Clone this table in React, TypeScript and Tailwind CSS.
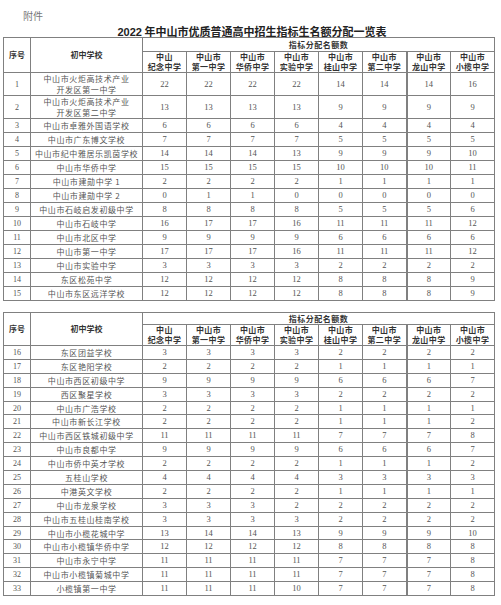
import React from 'react';

type Row = { no: number; school: string[]; nums: number[]; tall?: boolean };

const heads = [
  ['中山', '纪念中学'],
  ['中山市', '第一中学'],
  ['中山市', '华侨中学'],
  ['中山市', '实验中学'],
  ['中山市', '桂山中学'],
  ['中山市', '第二中学'],
  ['中山市', '龙山中学'],
  ['中山市', '小榄中学'],
];

const first: Row[] = [
  { no: 1, school: ['中山市火炬高技术产业', '开发区第一中学'], nums: [22, 22, 22, 22, 14, 14, 14, 16], tall: true },
  { no: 2, school: ['中山市火炬高技术产业', '开发区第二中学'], nums: [13, 13, 13, 13, 9, 9, 9, 9], tall: true },
  { no: 3, school: ['中山市卓雅外国语学校'], nums: [6, 6, 6, 6, 4, 4, 4, 4] },
  { no: 4, school: ['中山市广东博文学校'], nums: [7, 7, 7, 7, 5, 5, 5, 5] },
  { no: 5, school: ['中山市纪中雅居乐凯茵学校'], nums: [14, 14, 14, 13, 9, 9, 9, 10] },
  { no: 6, school: ['中山市华侨中学'], nums: [15, 15, 15, 15, 10, 10, 10, 11] },
  { no: 7, school: ['中山市建勋中学 1'], nums: [2, 2, 2, 2, 1, 1, 1, 1] },
  { no: 8, school: ['中山市建勋中学 2'], nums: [0, 1, 1, 0, 0, 0, 0, 0] },
  { no: 9, school: ['中山市石岐启发初级中学'], nums: [8, 8, 8, 8, 5, 5, 5, 6] },
  { no: 10, school: ['中山市石岐中学'], nums: [16, 17, 17, 16, 11, 11, 11, 12] },
  { no: 11, school: ['中山市北区中学'], nums: [9, 9, 9, 9, 6, 6, 6, 6] },
  { no: 12, school: ['中山市第一中学'], nums: [17, 17, 17, 16, 11, 11, 11, 12] },
  { no: 13, school: ['中山市实验中学'], nums: [3, 3, 3, 3, 2, 2, 2, 2] },
  { no: 14, school: ['东区松苑中学'], nums: [12, 12, 12, 12, 8, 8, 8, 9] },
  { no: 15, school: ['中山市东区远洋学校'], nums: [12, 12, 12, 12, 8, 8, 8, 9] },
];

const second: Row[] = [
  { no: 16, school: ['东区团益学校'], nums: [3, 3, 3, 3, 2, 2, 2, 2] },
  { no: 17, school: ['东区艳阳学校'], nums: [2, 2, 2, 2, 1, 1, 1, 1] },
  { no: 18, school: ['中山市西区初级中学'], nums: [9, 9, 9, 9, 6, 6, 6, 7] },
  { no: 19, school: ['西区聚星学校'], nums: [3, 3, 3, 3, 2, 2, 2, 2] },
  { no: 20, school: ['中山市广浩学校'], nums: [2, 2, 2, 2, 1, 1, 1, 1] },
  { no: 21, school: ['中山市新长江学校'], nums: [2, 2, 2, 2, 1, 1, 1, 2] },
  { no: 22, school: ['中山市西区铁城初级中学'], nums: [11, 11, 11, 11, 7, 7, 7, 8] },
  { no: 23, school: ['中山市良都中学'], nums: [9, 9, 9, 9, 6, 6, 6, 7] },
  { no: 24, school: ['中山市侨中英才学校'], nums: [2, 2, 2, 2, 1, 1, 1, 2] },
  { no: 25, school: ['五桂山学校'], nums: [4, 4, 4, 4, 3, 3, 3, 3] },
  { no: 26, school: ['中港英文学校'], nums: [2, 2, 2, 2, 1, 1, 1, 1] },
  { no: 27, school: ['中山市龙泉学校'], nums: [3, 3, 3, 2, 2, 2, 2, 2] },
  { no: 28, school: ['中山市五桂山桂南学校'], nums: [3, 3, 3, 3, 2, 2, 2, 2] },
  { no: 29, school: ['中山市小榄花城中学'], nums: [13, 14, 14, 13, 9, 9, 9, 10] },
  { no: 30, school: ['中山市小榄镇华侨中学'], nums: [12, 12, 12, 12, 8, 8, 8, 8] },
  { no: 31, school: ['中山市永宁中学'], nums: [11, 11, 11, 11, 7, 7, 7, 8] },
  { no: 32, school: ['中山市小榄镇菊城中学'], nums: [11, 11, 11, 11, 7, 7, 7, 8] },
  { no: 33, school: ['小榄镇第一中学'], nums: [11, 11, 11, 10, 7, 7, 7, 8] },
];

const cell = 'border border-[#808080] p-0 text-center align-middle';

function QuotaTable({ rows, titleH, headH, rowH }: { rows: Row[]; titleH: string; headH: string; rowH: string }) {
  return (
    <table className="table-fixed border-collapse w-[491px] text-[#555]">
      <colgroup>
        <col className="w-[27px]" />
        <col className="w-[112px]" />
        {heads.map((_, i) => (
          <col key={i} className="w-[44px]" />
        ))}
      </colgroup>
      <thead className="font-bold text-[#333] text-[8px] leading-[10px]">
        <tr className={titleH}>
          <th rowSpan={2} className={cell}>序号</th>
          <th rowSpan={2} className={cell}>初中学校</th>
          <th colSpan={8} className={`${cell} tracking-[0.5px]`}>指标分配名额数</th>
        </tr>
        <tr className={headH}>
          {heads.map((h, i) => (
            <th key={i} className={`${cell} tracking-[0.4px] ${i === 5 ? 'border-r-2' : ''}`}>
              <div>{h[0]}</div>
              <div>{h[1]}</div>
            </th>
          ))}
        </tr>
      </thead>
      <tbody className="text-[8px] leading-[11px]">
        {rows.map((r) => (
          <tr key={r.no} className={r.tall ? 'h-[22px]' : rowH}>
            <td className={`${cell} font-['Liberation_Serif',serif]`}>{r.no}</td>
            <td className={`${cell} tracking-[0.6px]`}>
              {r.school.map((s, i) => (
                <div key={i}>{s}</div>
              ))}
            </td>
            {r.nums.map((n, i) => (
              <td key={i} className={`${cell} font-['Liberation_Serif',serif] text-[8.5px] ${i === 5 ? 'border-r-2' : ''}`}>
                {n}
              </td>
            ))}
          </tr>
        ))}
      </tbody>
    </table>
  );
}

export default function App() {
  return (
    <div className="w-[501px] h-[605px] bg-white overflow-hidden font-['Noto_Sans_CJK_SC','Noto_Sans',sans-serif]">
      <div className="pl-[23px] pt-[9px] text-[10px] leading-[13px] text-[#777]">附件</div>
      <h1 className="text-center text-[11px] leading-[12px] font-bold text-[#222] mt-[3px] pl-[3px]">
        <span className="font-['Liberation_Sans',sans-serif]">2022</span> 年中山市优质普通高中招生指标生名额分配一览表
      </h1>
      <div className="pl-[3px] -mt-[1px]">
        <QuotaTable rows={first} titleH="h-[14px]" headH="h-[21px]" rowH="h-[14px]" />
      </div>
      <div className="pl-[3px] mt-[11px]">
        <QuotaTable rows={second} titleH="h-[12px]" headH="h-[21px]" rowH="h-[13.9px]" />
      </div>
    </div>
  );
}
